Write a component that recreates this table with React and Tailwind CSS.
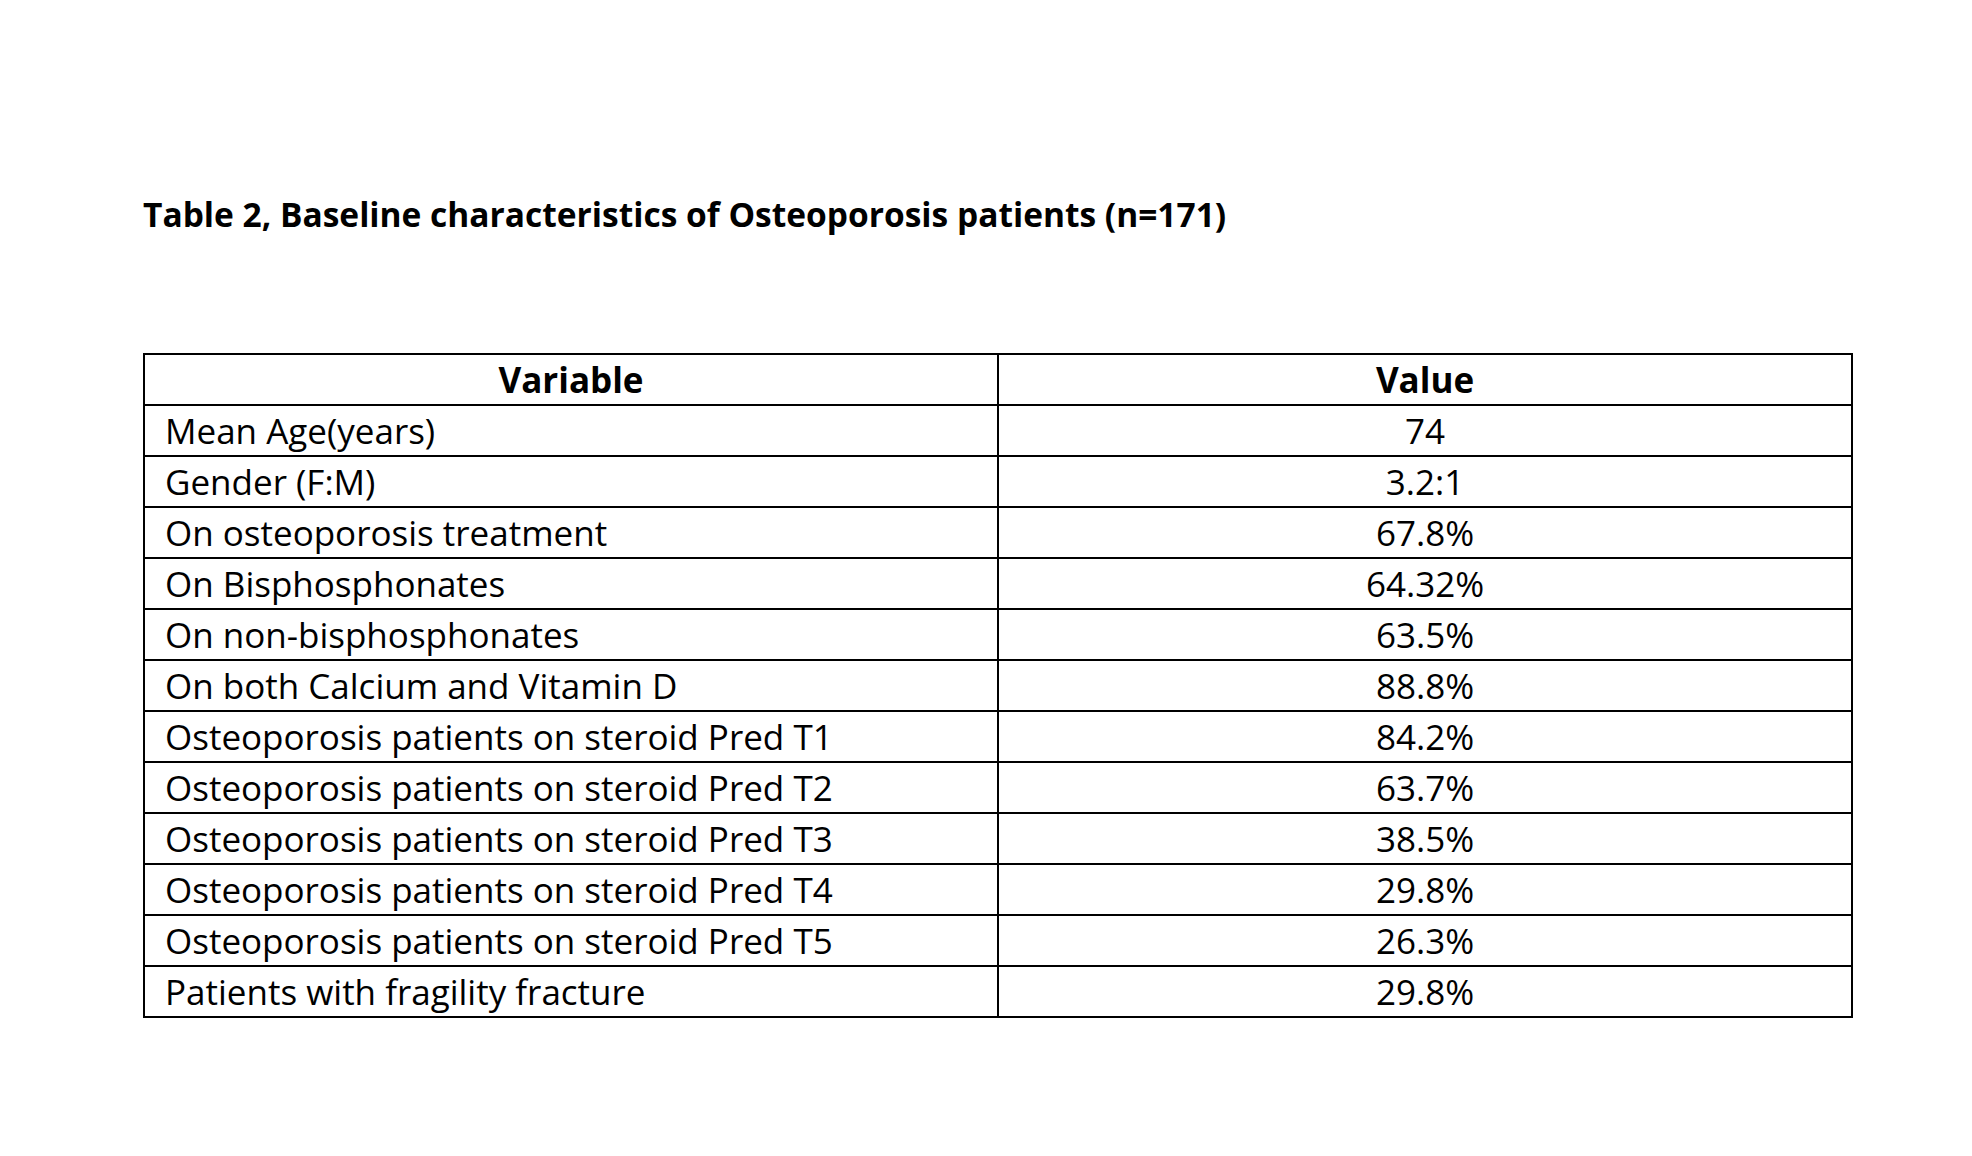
import React from 'react';

const rows = [
  ['Mean Age(years)', '74'],
  ['Gender (F:M)', '3.2:1'],
  ['On osteoporosis treatment', '67.8%'],
  ['On Bisphosphonates', '64.32%'],
  ['On non-bisphosphonates', '63.5%'],
  ['On both Calcium and Vitamin D', '88.8%'],
  ['Osteoporosis patients on steroid Pred T1', '84.2%'],
  ['Osteoporosis patients on steroid Pred T2', '63.7%'],
  ['Osteoporosis patients on steroid Pred T3', '38.5%'],
  ['Osteoporosis patients on steroid Pred T4', '29.8%'],
  ['Osteoporosis patients on steroid Pred T5', '26.3%'],
  ['Patients with fragility fracture', '29.8%'],
];

const App = () => {
  return (
    <div
      className="w-[1972px] h-[1156px] bg-white text-black pl-[143px] pt-[190px]"
      style={{ fontFamily: '"Open Sans", "Noto Sans", sans-serif' }}
    >
      <h1 className="text-[33.5px] font-bold leading-[48px]">
        Table 2, Baseline characteristics of Osteoporosis patients (n=171)
      </h1>

      <table className="mt-[115px] w-[1710px] border-collapse border-2 border-black text-[35px] leading-[49px]">
        <thead>
          <tr className="h-[51px]">
            <th className="w-[854px] border-2 border-black font-bold text-center p-0">Variable</th>
            <th className="border-2 border-black font-bold text-center p-0">Value</th>
          </tr>
        </thead>
        <tbody>
          {rows.map(([label, value]) => (
            <tr key={label} className="h-[50.9px]">
              <td className="border-2 border-black pl-[20px] py-0 text-left">{label}</td>
              <td className="border-2 border-black text-center py-0">{value}</td>
            </tr>
          ))}
        </tbody>
      </table>
    </div>
  );
};

export default App;
